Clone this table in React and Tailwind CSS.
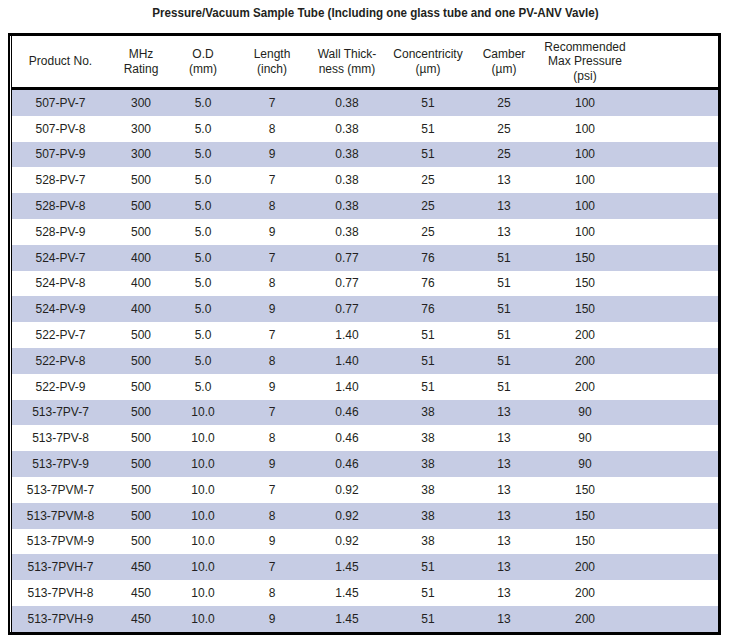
import React from "react";

const rows = [
  ["507-PV-7", "300", "5.0", "7", "0.38", "51", "25", "100"],
  ["507-PV-8", "300", "5.0", "8", "0.38", "51", "25", "100"],
  ["507-PV-9", "300", "5.0", "9", "0.38", "51", "25", "100"],
  ["528-PV-7", "500", "5.0", "7", "0.38", "25", "13", "100"],
  ["528-PV-8", "500", "5.0", "8", "0.38", "25", "13", "100"],
  ["528-PV-9", "500", "5.0", "9", "0.38", "25", "13", "100"],
  ["524-PV-7", "400", "5.0", "7", "0.77", "76", "51", "150"],
  ["524-PV-8", "400", "5.0", "8", "0.77", "76", "51", "150"],
  ["524-PV-9", "400", "5.0", "9", "0.77", "76", "51", "150"],
  ["522-PV-7", "500", "5.0", "7", "1.40", "51", "51", "200"],
  ["522-PV-8", "500", "5.0", "8", "1.40", "51", "51", "200"],
  ["522-PV-9", "500", "5.0", "9", "1.40", "51", "51", "200"],
  ["513-7PV-7", "500", "10.0", "7", "0.46", "38", "13", "90"],
  ["513-7PV-8", "500", "10.0", "8", "0.46", "38", "13", "90"],
  ["513-7PV-9", "500", "10.0", "9", "0.46", "38", "13", "90"],
  ["513-7PVM-7", "500", "10.0", "7", "0.92", "38", "13", "150"],
  ["513-7PVM-8", "500", "10.0", "8", "0.92", "38", "13", "150"],
  ["513-7PVM-9", "500", "10.0", "9", "0.92", "38", "13", "150"],
  ["513-7PVH-7", "450", "10.0", "7", "1.45", "51", "13", "200"],
  ["513-7PVH-8", "450", "10.0", "8", "1.45", "51", "13", "200"],
  ["513-7PVH-9", "450", "10.0", "9", "1.45", "51", "13", "200"],
];

const headers = [
  ["Product No."],
  ["MHz", "Rating"],
  ["O.D", "(mm)"],
  ["Length", "(inch)"],
  ["Wall Thick-", "ness (mm)"],
  ["Concentricity", "(µm)"],
  ["Camber", "(µm)"],
  ["Recommended", "Max Pressure", "(psi)"],
];

const cols = "grid grid-cols-[97px_64px_60px_78px_72px_90px_62px_100px_1fr]";

export default function App() {
  return (
    <div className="w-[730px] h-[640px] bg-white text-[#231f20] font-['Liberation_Sans',Arial,sans-serif]">
      {/* Title */}
      <div className="h-[33px] pt-[4px] pl-[20px] text-center text-[13.5px] leading-[17px] font-bold">
        <span className="inline-block scale-x-[0.86] whitespace-nowrap">
          Pressure/Vacuum Sample Tube (Including one glass tube and one PV-ANV Vavle)
        </span>
      </div>

      {/* Table */}
      <div className="ml-[8px] w-[713px] border-t-[3px] border-r-[3px] border-b-[3px] border-l-2 border-black pl-[1px]">
        <div className="border-l border-black">
          <div className={`${cols} h-[54px] border-b-[3px] border-black text-[12px] leading-[14.5px]`}>
            {headers.map((h, i) => (
              <div key={i} className="flex flex-col items-center justify-center text-center">
                {h.map((line) => (
                  <span key={line}>{line}</span>
                ))}
              </div>
            ))}
            <div />
          </div>

          {rows.map((r, i) => (
            <div
              key={r[0]}
              className={`${cols} h-[25.8px] items-center text-[12px] ${i % 2 === 0 ? "bg-[#c6cce4]" : "bg-white"}`}
            >
              {r.map((c, j) => (
                <div key={j} className="text-center">
                  {c}
                </div>
              ))}
              <div />
            </div>
          ))}
        </div>
      </div>
    </div>
  );
}
